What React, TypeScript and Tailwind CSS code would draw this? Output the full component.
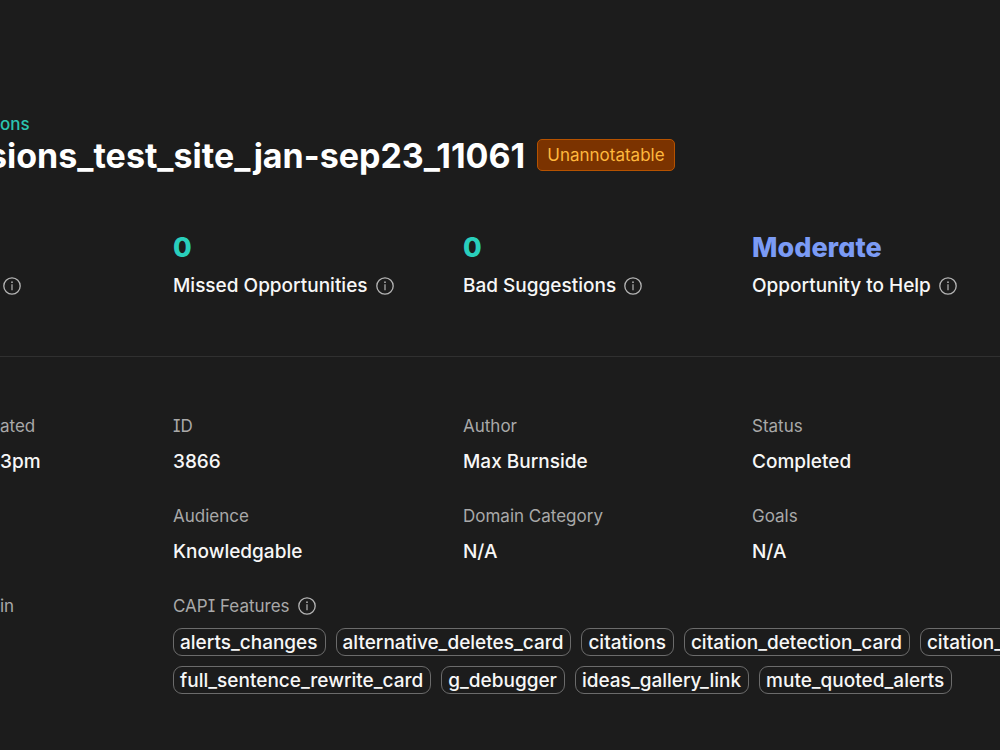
import type { ReactNode } from "react";

const rowOne = [
  "alerts_changes",
  "alternative_deletes_card",
  "citations",
  "citation_detection_card",
  "citation_"
];

const rowTwo = ["full_sentence_rewrite_card", "g_debugger", "ideas_gallery_link", "mute_quoted_alerts"];

const columns = "grid grid-cols-[173fr_290fr_289fr_248fr]";

function InfoButton({ label }: { label: string }) {
  return (
    <button type="button" aria-label={`About ${label}`} className="shrink-0 text-[#b4b4b4]">
      <svg viewBox="0 0 18 18" fill="none" className="block size-[18px]">
        <circle cx="9" cy="9" r="8.2" stroke="currentColor" strokeWidth="1.3" />
        <circle cx="9" cy="5.2" r="0.85" fill="currentColor" />
        <path d="M9 7.3v6" stroke="currentColor" strokeWidth="1.2" />
      </svg>
    </button>
  );
}

function Stat({ value, label, tone }: { value: string; label: string; tone: string }) {
  return (
    <div className="min-w-0 whitespace-nowrap">
      <p className={`text-[27px] leading-8 font-extrabold [font-feature-settings:'cv11'] ${tone}`}>{value}</p>
      <div className="mt-2 flex items-center gap-2">
        <span className="text-[19px] leading-7 font-medium">{label}</span>
        <InfoButton label={label} />
      </div>
    </div>
  );
}

function Field({ label, children }: { label: string; children?: ReactNode }) {
  return (
    <div className="min-w-0 whitespace-nowrap">
      <dt className="text-[17px] leading-6 text-[#a9a9a9]">{label}</dt>
      <dd className="mt-[10px] text-[19px] leading-7 font-medium">{children}</dd>
    </div>
  );
}

function ChipRow({ names }: { names: string[] }) {
  return (
    <ul className="flex gap-[10px]">
      {names.map((name) => (
        <li
          key={name}
          className="shrink-0 rounded-[9px] border border-[#6b6b6b] pt-[2px] pr-[7px] pl-[6px] text-[19px] leading-6 font-medium"
        >
          {name}
        </li>
      ))}
    </ul>
  );
}

export default function App() {
  return (
    <main className="min-h-screen overflow-hidden bg-[#1c1c1c] pt-28 font-['Inter',sans-serif] text-[#f7f7f7] [font-feature-settings:'cv08']">
      <header className="whitespace-nowrap">
        <a href="#sessions" className="block text-[17px] leading-6 font-medium text-[#2bc4b0]">
          ons
        </a>
        <div className="-ml-3 flex items-center gap-3">
          <h1 className="text-[34px] leading-10 font-bold text-white">
            sions_test_site_jan-sep23_11061
          </h1>
          <span className="mb-[2px] rounded-[5px] border border-[#b65200] bg-[#7b3300] px-[9px] text-[17px] leading-[30px] text-[#ffb83d]">
            Unannotatable
          </span>
        </div>
      </header>

      <section className={`${columns} border-b border-[#303030] pt-14 pb-14`}>
        <div className="flex items-end pb-[5px] pl-[3px]">
          <InfoButton label="sessions" />
        </div>
        <Stat value="0" label="Missed Opportunities" tone="text-[#29cfbc]" />
        <Stat value="0" label="Bad Suggestions" tone="text-[#29cfbc]" />
        <Stat value="Moderate" label="Opportunity to Help" tone="text-[#7b9bf5]" />
      </section>

      <dl className={`${columns} gap-y-[28px] pt-[57px]`}>
        <Field label="ated">3pm</Field>
        <Field label="ID">3866</Field>
        <Field label="Author">Max Burnside</Field>
        <Field label="Status">Completed</Field>
        <div />
        <Field label="Audience">Knowledgable</Field>
        <Field label="Domain Category">N/A</Field>
        <Field label="Goals">N/A</Field>
        <Field label="in" />
        <div className="col-span-3 min-w-0 whitespace-nowrap">
          <dt className="flex items-center gap-2 text-[17px] leading-6 text-[#a9a9a9]">
            CAPI Features
            <InfoButton label="CAPI Features" />
          </dt>
          <dd className="mt-[10px] grid gap-[10px]">
            <ChipRow names={rowOne} />
            <ChipRow names={rowTwo} />
          </dd>
        </div>
      </dl>
    </main>
  );
}
